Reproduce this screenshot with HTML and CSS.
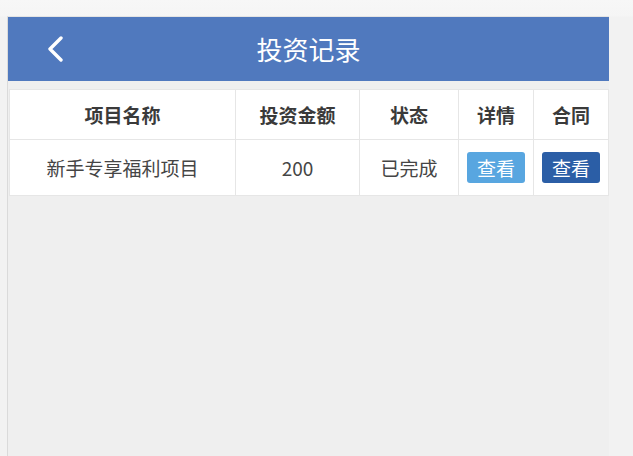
FILE: index.html
```html
<!DOCTYPE html>
<html lang="zh-CN">
<head>
  <meta charset="UTF-8" />
  <meta name="viewport" content="width=device-width, initial-scale=1.0" />
  <title>投资记录</title>
  <link rel="stylesheet" href="styles.css">
</head>
<body>
  <div class="frame">
    <header class="topbar">
      <a class="back" href="#">
        <svg width="20" height="26" viewBox="0 0 20 26">
          <path d="M14 2 L3 13 L14 24" fill="none" stroke="#fff" stroke-width="3.4" stroke-linecap="round" stroke-linejoin="round"/>
        </svg>
      </a>
      <h1>投资记录</h1>
    </header>

    <table class="records">
      <colgroup>
        <col class="col-name">
        <col class="col-amount">
        <col class="col-status">
        <col class="col-btn">
        <col class="col-btn">
      </colgroup>
      <thead>
        <tr>
          <th>项目名称</th>
          <th>投资金额</th>
          <th>状态</th>
          <th>详情</th>
          <th>合同</th>
        </tr>
      </thead>
      <tbody>
        <tr>
          <td>新手专享福利项目</td>
          <td>200</td>
          <td>已完成</td>
          <td><button class="btn btn-light">查看</button></td>
          <td><button class="btn btn-dark">查看</button></td>
        </tr>
      </tbody>
    </table>
  </div>
</body>
</html>
```

FILE: styles.css
```css
:root {
  --blue: #5079be;
  --line: #e6e6e6;
  --text: #444;
}

html, body {
  height: 100%;
}

body {
  margin: 0;
  background: linear-gradient(to bottom, #f7f7f7 0, #f5f5f5 16px, #f2f2f2 17px);
  font-family: "Noto Sans CJK SC", "Liberation Sans", sans-serif;
  color: var(--text);
  overflow: hidden;
}

.frame {
  margin: 16px 0 0 7px;
  width: 601px;
  height: 100%;
  border-left: 1px solid #dadada;
  border-top: 1px solid #e4e4e4;
  background: #efefef;
}

.topbar {
  position: relative;
  height: 64px;
  background: var(--blue);
  display: flex;
  align-items: center;
  justify-content: center;
}

.topbar h1 {
  margin: 0;
  font-size: 26px;
  font-weight: normal;
  color: #fff;
  line-height: 1;
}

.back {
  position: absolute;
  left: 39px;
  top: 19px;
  display: block;
  width: 20px;
  height: 26px;
}

.records {
  margin: 8px 0 0 1px;
  width: 600px;
  table-layout: fixed;
  border-collapse: collapse;
  background: #fff;
  font-size: 19px;
}

.records th,
.records td {
  border: 1px solid var(--line);
  text-align: center;
  vertical-align: middle;
  padding: 0;
}

.records th {
  height: 49px;
  font-weight: bold;
  color: #3a3a3a;
}

.records td {
  height: 55px;
  color: #454545;
}

.col-name { width: 226px; }
.col-amount { width: 124px; }
.col-status { width: 99px; }
.col-btn { width: 75px; }

.btn {
  border: none;
  border-radius: 3px;
  width: 58px;
  height: 31px;
  padding: 0;
  font-family: inherit;
  font-size: 19px;
  color: #fff;
  line-height: 31px;
  cursor: pointer;
}

.btn-light { background: #58a6e0; }
.btn-dark { background: #2b5ea6; }
```
